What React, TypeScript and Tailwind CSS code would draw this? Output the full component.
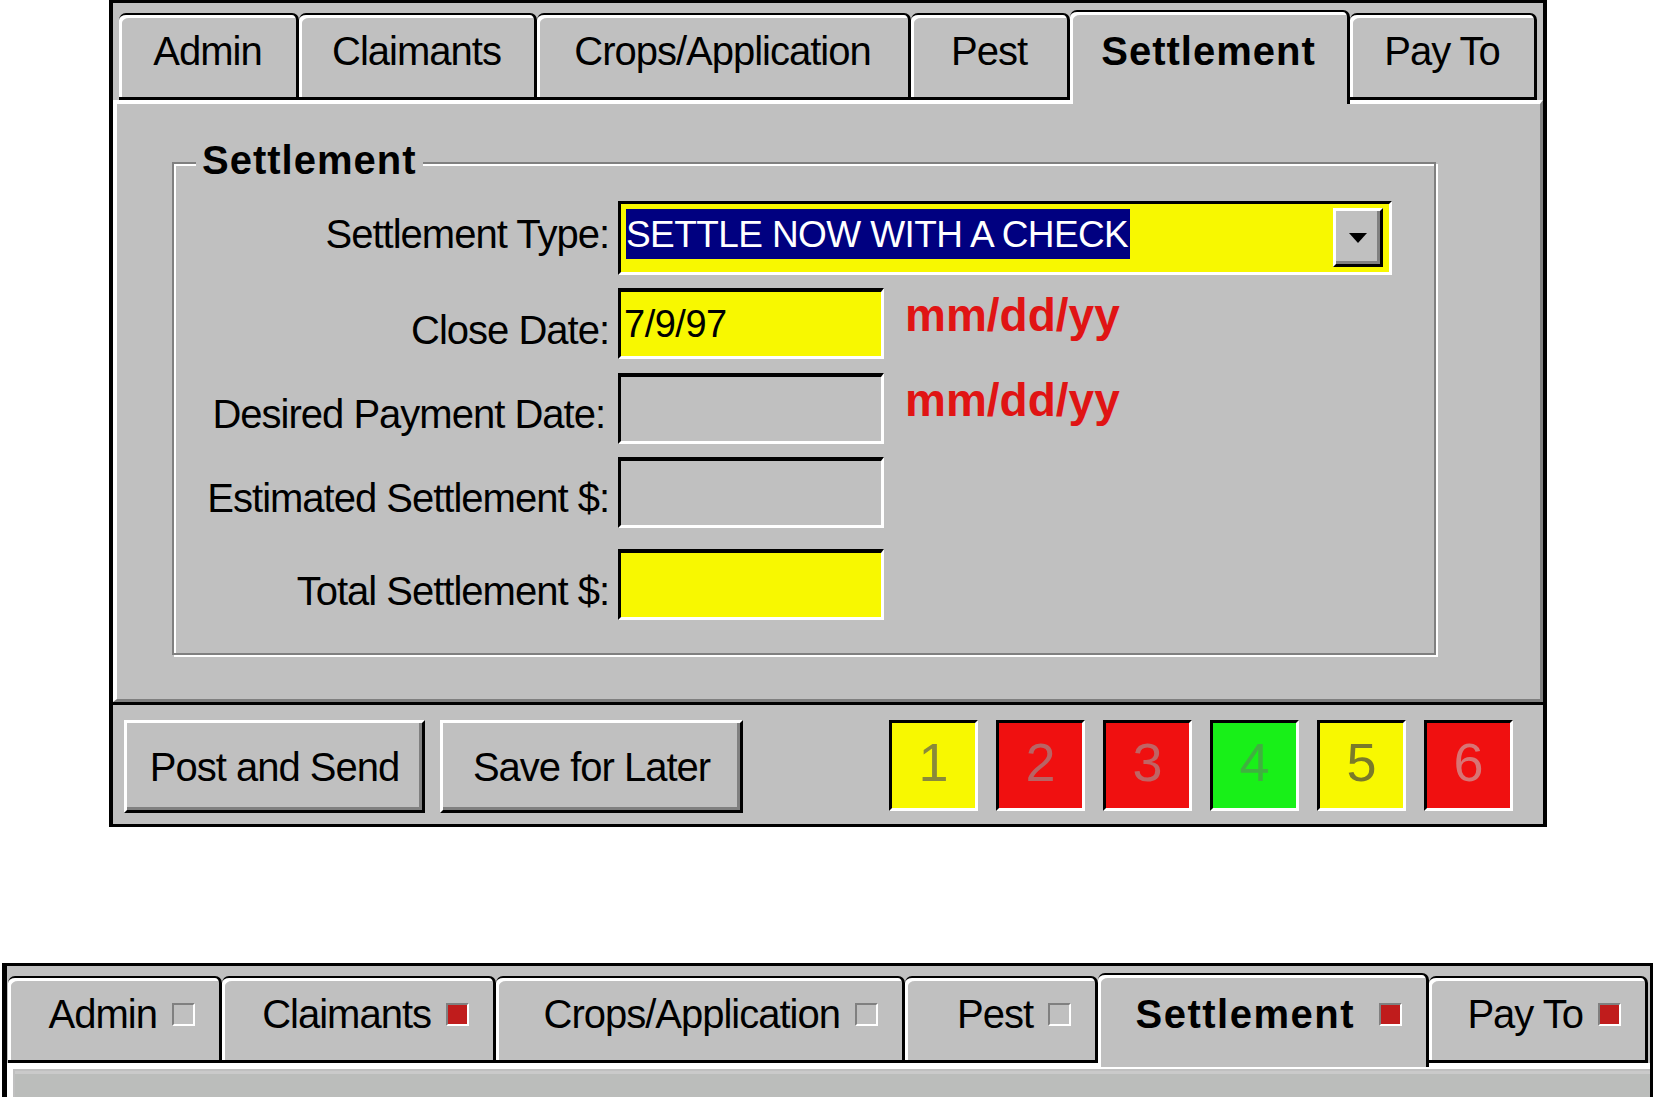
import clsx from 'clsx';

type TabDef = { label: string; w: string; selected?: boolean; mark?: boolean };

const topTabs: TabDef[] = [
  { label: 'Admin', w: 'w-[180px]' },
  { label: 'Claimants', w: 'w-[238px]' },
  { label: 'Crops/Application', w: 'w-[374px]' },
  { label: 'Pest', w: 'w-[159px]' },
  { label: 'Settlement', w: 'w-[280px]', selected: true },
  { label: 'Pay To', w: 'w-[187px]' },
];

const bottomTabs: TabDef[] = [
  { label: 'Admin', w: 'w-[214px]' },
  { label: 'Claimants', w: 'w-[274px]', mark: true },
  { label: 'Crops/Application', w: 'w-[409px]' },
  { label: 'Pest', w: 'w-[193px]' },
  { label: 'Settlement', w: 'w-[331px]', selected: true, mark: true },
  { label: 'Pay To', w: 'w-[219px]', mark: true },
];

const boxes = [
  { n: '1', cls: 'bg-[#f8f800] text-[#8a8a3a]' },
  { n: '2', cls: 'bg-[#f01010] text-[#b86464]' },
  { n: '3', cls: 'bg-[#f01010] text-[#c06464]' },
  { n: '4', cls: 'bg-[#18f018] text-[#40b040]' },
  { n: '5', cls: 'bg-[#f8f800] text-[#7a7a2a]' },
  { n: '6', cls: 'bg-[#f01010] text-[#d87474]' },
];

function Tab({ tab, withMark }: { tab: TabDef; withMark?: boolean }) {
  return (
    <div
      className={clsx(
        'relative flex shrink-0 rounded-t-[7px] border-t-[2px] border-r-[3px] border-t-black border-r-black bg-[#c0c0c0] shadow-[inset_3px_3px_0_#fff]',
        tab.w,
        tab.selected ? 'z-10 -mb-[4px] h-[94px] pt-[19px]' : 'h-[87px] border-b-[3px] border-b-black pt-[16px]',
        withMark ? 'justify-end pr-[24px]' : 'justify-center'
      )}
    >
      <div className="flex h-[40px] items-center gap-[15px]">
        <span
          className={clsx(
            'text-[40px] leading-none whitespace-nowrap',
            tab.selected ? 'font-bold' : 'tracking-[-1px]',
            tab.selected && (withMark ? 'mr-[9px] tracking-[1.5px]' : 'tracking-[1px]')
          )}
        >
          {tab.label}
        </span>
        {withMark && (
          <span
            className={clsx(
              'h-[23px] w-[23px] shrink-0 border-[2px] border-t-[#808080] border-l-[#808080] border-b-white border-r-white',
              tab.mark ? 'bg-[#c01c1c]' : 'bg-[#c0c0c0]'
            )}
          />
        )}
      </div>
    </div>
  );
}

function Field({ yellow, value }: { yellow?: boolean; value?: string }) {
  return (
    <div
      className={clsx(
        'flex h-[71px] w-[266px] shrink-0 items-center border-t-[4px] border-l-[3px] border-r-[3px] border-b-[3px] border-t-black border-l-black border-r-white border-b-white pl-[3px]',
        yellow ? 'bg-[#f8f800]' : 'bg-[#c0c0c0]'
      )}
    >
      {value && <span className="text-[38px] leading-none tracking-[-0.5px]">{value}</span>}
    </div>
  );
}

function Hint() {
  return (
    <span className="mt-[4px] ml-[21px] self-start text-[46px] leading-none font-bold text-[#e01414]">
      mm/dd/yy
    </span>
  );
}

function Label({ text, cls }: { text: string; cls?: string }) {
  return (
    <div
      className={clsx(
        'w-[444px] shrink-0 text-right text-[40px] leading-none tracking-[-1px] whitespace-nowrap',
        cls
      )}
    >
      {text}
    </div>
  );
}

function RaisedButton({ label, w }: { label: string; w: string }) {
  return (
    <button
      className={clsx(
        'flex h-[93px] items-center justify-center border-[3px] border-t-white border-l-white border-r-black border-b-black bg-[#c0c0c0] text-[40px] leading-none tracking-[-1px] shadow-[inset_-3px_-3px_0_#808080]',
        w
      )}
    >
      {label}
    </button>
  );
}

function TopWindow() {
  return (
    <div className="h-[827px] w-[1438px] border-t-[3px] border-r-[4px] border-b-[3px] border-l-[4px] border-black bg-[#c0c0c0]">
      <div className="flex h-[97px] items-end pl-[6px]">
        {topTabs.map((t) => (
          <Tab key={t.label} tab={t} />
        ))}
      </div>

      <div className="h-[602px] border-t-[4px] border-l-[4px] border-r-[3px] border-b-[3px] border-t-white border-l-white border-r-[#808080] border-b-[#808080] pt-[58px] pl-[55px]">
        <div className="relative h-[493px] w-[1264px] border-[2px] border-[#808080] pt-[37px] shadow-[inset_2px_2px_0_#fff,2px_2px_0_#fff]">
          <span className="absolute -top-[24px] left-[22px] bg-[#c0c0c0] px-[6px] text-[40px] leading-none font-bold tracking-[1px]">
            Settlement
          </span>

          <div className="flex h-[74px] items-center">
            <Label text="Settlement Type:" cls="pr-[9px] pb-[8px]" />
            <div className="flex h-[74px] w-[774px] shrink-0 items-start justify-between border-[3px] border-t-black border-l-black border-r-white border-b-white bg-[#f8f800] pt-[5px] pr-[6px] pl-[5px]">
              <span className="flex h-[50px] items-center bg-[#000080] pr-[2px] text-[37px] leading-none tracking-[-0.6px] whitespace-nowrap text-white">
                SETTLE NOW WITH A CHECK
              </span>
              <span className="-mt-[1px] flex h-[59px] w-[50px] items-center justify-center border-[3px] border-t-white border-l-white border-r-black border-b-black bg-[#c0c0c0] shadow-[inset_-3px_-3px_0_#808080]">
                <svg width="18" height="10" viewBox="0 0 18 10">
                  <path d="M0 0H18L9 10Z" fill="#000" />
                </svg>
              </span>
            </div>
          </div>

          <div className="mt-[13px] flex items-center">
            <Label text="Close Date:" cls="pr-[9px] pt-[13px]" />
            <Field yellow value="7/9/97" />
            <Hint />
          </div>

          <div className="mt-[14px] flex items-center">
            <Label text="Desired Payment Date:" cls="pr-[13px] pt-[11px]" />
            <Field />
            <Hint />
          </div>

          <div className="mt-[13px] flex items-center">
            <Label text="Estimated Settlement $:" cls="pr-[9px] pt-[11px]" />
            <Field />
          </div>

          <div className="mt-[21px] flex items-center">
            <Label text="Total Settlement $:" cls="pr-[9px] pt-[12px]" />
            <Field yellow />
          </div>
        </div>
      </div>

      <div className="h-[3px] bg-black" />

      <div className="flex h-[119px] items-start pt-[15px] pr-[30px] pl-[11px]">
        <div className="flex gap-[15px]">
          <RaisedButton label="Post and Send" w="w-[301px]" />
          <RaisedButton label="Save for Later" w="w-[303px]" />
        </div>
        <div className="ml-auto flex gap-[18px]">
          {boxes.map((b) => (
            <div
              key={b.n}
              className={clsx(
                'flex h-[91px] w-[89px] items-center justify-center border-[3px] border-t-black border-l-black border-r-white border-b-white pb-[8px] text-[54px] leading-none',
                b.cls
              )}
            >
              {b.n}
            </div>
          ))}
        </div>
      </div>
    </div>
  );
}

function BottomWindow() {
  return (
    <div className="h-[200px] w-[1651px] border-t-[3px] border-r-[3px] border-l-[5px] border-black bg-[#c0c0c0]">
      <div className="flex h-[97px] items-end pl-[1px]">
        {bottomTabs.map((t) => (
          <Tab key={t.label} tab={t} withMark />
        ))}
      </div>
      <div className="h-[100px] border-t-[6px] border-l-[6px] border-t-white border-l-white pt-[2px] pl-[2px]">
        <div className="h-full border-t-[3px] border-[#cacaca] bg-[#bbbdbb]" />
      </div>
    </div>
  );
}

export default function App() {
  return (
    <div className="h-[1097px] w-[1656px] overflow-hidden bg-white font-['Liberation_Sans',Arial,sans-serif] text-black">
      <div className="ml-[109px]">
        <TopWindow />
      </div>
      <div className="mt-[136px] ml-[2px]">
        <BottomWindow />
      </div>
    </div>
  );
}
